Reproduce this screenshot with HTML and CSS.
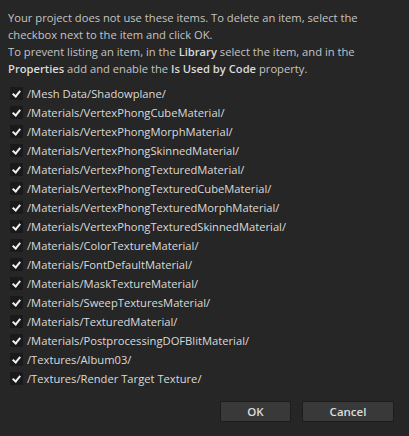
FILE: index.html
```html
<!DOCTYPE html>
<html>
<head>
<meta charset="utf-8">
<link rel="stylesheet" href="styles.css">
</head>
<body>
<div class="dialog">
  <div class="intro">
    <p>Your project does not use these items. To delete an item, select the checkbox next to the item and click OK.</p>
    <p>To prevent listing an item, in the <b>Library</b> select the item, and in the <b>Properties</b> add and enable the <b>Is Used by Code</b> property.</p>
  </div>
  <ul class="list">
    <li><span class="cb"></span>/Mesh Data/Shadowplane/</li>
    <li><span class="cb"></span>/Materials/VertexPhongCubeMaterial/</li>
    <li><span class="cb"></span>/Materials/VertexPhongMorphMaterial/</li>
    <li><span class="cb"></span>/Materials/VertexPhongSkinnedMaterial/</li>
    <li><span class="cb"></span>/Materials/VertexPhongTexturedMaterial/</li>
    <li><span class="cb"></span>/Materials/VertexPhongTexturedCubeMaterial/</li>
    <li><span class="cb"></span>/Materials/VertexPhongTexturedMorphMaterial/</li>
    <li><span class="cb"></span>/Materials/VertexPhongTexturedSkinnedMaterial/</li>
    <li><span class="cb"></span>/Materials/ColorTextureMaterial/</li>
    <li><span class="cb"></span>/Materials/FontDefaultMaterial/</li>
    <li><span class="cb"></span>/Materials/MaskTextureMaterial/</li>
    <li><span class="cb"></span>/Materials/SweepTexturesMaterial/</li>
    <li><span class="cb"></span>/Materials/TexturedMaterial/</li>
    <li><span class="cb"></span>/Materials/PostprocessingDOFBlitMaterial/</li>
    <li><span class="cb"></span>/Textures/Album03/</li>
    <li><span class="cb"></span>/Textures/Render Target Texture/</li>
  </ul>
  <div class="buttons">
    <button class="btn ok">OK</button>
    <button class="btn cancel">Cancel</button>
  </div>
</div>
</body>
</html>
```
FILE: styles.css
```css
html, body {
  margin: 0;
  padding: 0;
  background: #262626;
  width: 409px;
  height: 436px;
  overflow: hidden;
}
.dialog {
  font-family: "Open Sans", "Noto Sans", sans-serif;
  font-size: 11.2px;
  color: #d2d2d2;
  padding: 9px 8px 0 8px;
}
.intro p {
  margin: 0;
  line-height: 17px;
  color: #c4c4c4;
}
.intro b {
  font-weight: 600;
  color: #dadada;
}
.list {
  list-style: none;
  margin: 7px 0 0 0;
  padding: 0 0 0 2px;
}
.list li {
  height: 19px;
  display: flex;
  align-items: center;
  gap: 4px;
  color: #dadada;
  white-space: nowrap;
}
.cb {
  width: 13px;
  height: 13px;
  background: #1a1a1a;
  position: relative;
  flex: none;
}
.cb::after {
  content: "";
  position: absolute;
  left: 4px;
  top: 2px;
  width: 3px;
  height: 6px;
  border-right: 2px solid #f0f0f0;
  border-bottom: 2px solid #f0f0f0;
  transform: rotate(40deg);
}
.buttons {
  display: flex;
  justify-content: flex-end;
  gap: 11px;
  margin-top: 13px;
  padding-right: 7px;
}
.btn {
  height: 21px;
  background: #393939;
  border: 1px solid #1c1c1c;
  border-radius: 2px;
  color: #dcdcdc;
  font-family: "Open Sans", "Noto Sans", sans-serif;
  font-weight: 600;
  font-size: 11.5px;
  padding: 0;
}
.ok { width: 71px; }
.cancel { width: 92px; }
```
